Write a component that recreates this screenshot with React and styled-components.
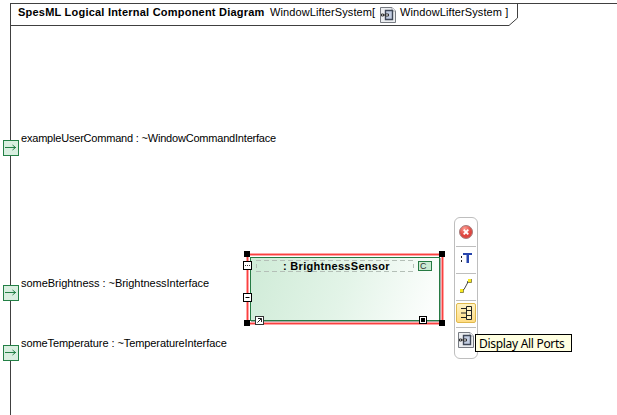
import React from "react";
import styled, { createGlobalStyle } from "styled-components";

const Global = createGlobalStyle`
  * { box-sizing: border-box; }
  body { margin: 0; background: #fff; overflow: hidden; }
`;

const Canvas = styled.main`
  position: relative;
  width: 617px;
  height: 415px;
  padding: 3px 0 0 10px;
  overflow: hidden;
  background: #fff;
  color: #000;
  font: 11px/14px "Liberation Sans", Arial, sans-serif;
`;

const Frame = styled.section`
  height: 412px;
  border: solid #404040;
  border-width: 1px 0 0 1px;
`;

const FrameTab = styled.header`
  position: relative;
  display: flex;
  align-items: flex-start;
  width: 507px;
  height: 22px;
  padding: 1px 0 0 7px;
  white-space: pre;
`;

const TabEdge = styled.svg`
  position: absolute;
  left: 0;
  top: 0;
`;

const Label = styled.span`
  display: block;
  white-space: pre;
  width: ${(p) => p.$w}px;
  flex: none;
  font-weight: ${(p) => (p.$bold ? 700 : 400)};
  letter-spacing: ${(p) => p.$track || 0}px;
`;

const TabIcon = styled.span`
  display: block;
  width: 20px;
  flex: none;
  height: 18px;
  padding-top: 2px;
`;

const Port = styled.div`
  position: absolute;
  left: 3px;
  top: ${(p) => p.$y}px;
  display: flex;
  gap: 2px;
`;

const PortBox = styled.span`
  display: block;
  width: 16px;
  height: 16px;
  border: 1px solid #238046;
  background: #d9efe0;
`;

const PortLabel = styled(Label)`
  margin-top: -9px;
`;

const Part = styled.article`
  position: absolute;
  left: 246px;
  top: 253px;
  width: 198px;
  height: 72px;
  border: 1px solid #ffa5a5;
  padding: 3px 2px 2px 3px;
  background: #fff;
  box-shadow: inset 0 0 0 1px #fa4040, inset 0 0 0 2px #ffa5a5;
`;

const PartBody = styled.div`
  display: flex;
  align-items: flex-start;
  width: 190px;
  height: 64px;
  padding: 2px 0 0 5px;
  border: 1px solid #267a43;
  background: linear-gradient(110deg, #cfebd7 0%, #e3f4e8 50%, #fff 100%);
  box-shadow: 1px 1px 0 #a5aaa7;
`;

const dash = "repeating-linear-gradient(90deg, #b4bfb7 0 5px, transparent 5px 8px)";

const PartName = styled.h1`
  width: 158px;
  height: 12px;
  margin: 0;
  padding: 1px 0 0 27px;
  background:
    ${dash} 0 0 / 100% 1px no-repeat,
    ${dash} 0 100% / 100% 1px no-repeat,
    linear-gradient(#b4bfb7, #b4bfb7) 0 4px / 1px 4px no-repeat,
    linear-gradient(#b4bfb7, #b4bfb7) 100% 4px / 1px 4px no-repeat;
  font-size: 11px;
  line-height: 10px;
`;

const TypeTag = styled.span`
  width: 14px;
  height: 10px;
  margin: 1px 0 0 4px;
  padding-left: 1px;
  border: 1px solid #267a43;
  background: #caead3;
  color: #333;
  font-size: 9px;
  line-height: 8px;
`;

const Handle = styled.i`
  position: absolute;
  left: ${(p) => p.$x}px;
  top: ${(p) => p.$y}px;
  width: 6px;
  height: 6px;
  background: #000;
`;

const Badge = styled.i`
  position: absolute;
  left: ${(p) => p.$x}px;
  top: ${(p) => p.$y}px;
  display: flex;
  width: ${(p) => p.$size || 9}px;
  height: ${(p) => p.$size || 9}px;
  border: 1px solid ${(p) => p.$line || "#000"};
  background: #fff;
`;

const Toolbar = styled.nav`
  position: absolute;
  left: 454px;
  top: 217px;
  display: flex;
  flex-direction: column;
  align-items: center;
  width: 24px;
  height: 142px;
  padding-top: 2px;
  border: 1px solid #bebebe;
  border-radius: 6px;
  background: #fff;
`;

const Tool = styled.button`
  display: flex;
  justify-content: center;
  align-items: center;
  flex: none;
  width: 20px;
  height: 20px;
  margin: 2px 0 4px;
  padding: 0;
  border: 1px solid ${(p) => (p.$active ? "#e0b94c" : "transparent")};
  border-radius: 2px;
  background: ${(p) => (p.$active ? "linear-gradient(#fff3c4, #ffdc84)" : "none")};
`;

const Divider = styled.hr`
  width: 20px;
  height: 1px;
  flex: none;
  margin: 0;
  border: 0;
  background: #bebebe;
`;

const Tooltip = styled.div`
  position: absolute;
  left: 475px;
  top: 334px;
  width: 97px;
  height: 18px;
  padding-left: 3px;
  border: 1px solid #000;
  background: #ffffe1;
  white-space: nowrap;
  font: 12px/17px "Noto Sans", "Open Sans", sans-serif;
  letter-spacing: -0.3px;
`;

const Svg = styled.svg`
  display: block;
  flex: none;
`;

function DiagramIcon() {
  return (
    <Svg width="16" height="16" viewBox="0 0 16 16" fill="none">
      <path d="M.5 .5H12L15.500 4v11.500H.5Z" fill="#eceef1" stroke="#777b82" />
      <path d="M12 .5v3.500h3.500" fill="#fff" stroke="#a5a8ad" />
      <path d="M5.500 3.500h7v9h-7z" fill="#c3cee3" stroke="#3f4858" strokeWidth="1.400" />
      <path d="M3 8h3" stroke="#222" />
      <path d="M5.500 7h3v2h-3zM1.500 7h2v2h-2z" fill="#fff" stroke="#333" />
    </Svg>
  );
}

function PortArrow() {
  return (
    <Svg width="14" height="14" viewBox="0 0 14 14" fill="none" stroke="#238046">
      <path d="M1 6.500h11" />
      <path d="M8.500 4l3 2.500-3 2.500" />
    </Svg>
  );
}

const ports = [
  { y: 140, text: "exampleUserCommand : ~WindowCommandInterface", w: 256, track: -0.2 },
  { y: 285, text: "someBrightness : ~BrightnessInterface", w: 190, track: -0.03 },
  { y: 345, text: "someTemperature : ~TemperatureInterface", w: 208, track: -0.08 },
];

const handles = [[-3, -3], [192, -3], [-3, 66], [192, 66]];

export default function App() {
  return (
    <Canvas>
      <Global />
      <Frame>
        <FrameTab>
          <TabEdge width="507" height="22" fill="none" stroke="#404040">
            <path d="M0 21.5H498L506.5 14V0" />
          </TabEdge>
          <Label $w={252} $bold $track={0.22}>SpesML Logical Internal Component Diagram</Label>
          <Label $w={110} $track={0.1}>WindowLifterSystem[</Label>
          <TabIcon><DiagramIcon /></TabIcon>
          <Label $w={110} $track={0.1}>WindowLifterSystem ]</Label>
        </FrameTab>
      </Frame>

      {ports.map((p) => (
        <Port key={p.y} $y={p.y}>
          <PortBox><PortArrow /></PortBox>
          <PortLabel $w={p.w} $track={p.track}>{p.text}</PortLabel>
        </Port>
      ))}

      <Part>
        <PartBody>
          <PartName><Label $w={125} $bold $track={0.3}>: BrightnessSensor</Label></PartName>
          <TypeTag>C</TypeTag>
        </PartBody>
        {handles.map(([x, y]) => <Handle key={`${x},${y}`} $x={x} $y={y} />)}
        <Badge $x={-4} $y={7}>
          <Svg width="7" height="7"><path d="M1 3.5h1m1 0h1m1 0h1" stroke="#333" /></Svg>
        </Badge>
        <Badge $x={-4} $y={39}>
          <Svg width="7" height="7"><path d="M1.5 3.5h4" stroke="#000" /></Svg>
        </Badge>
        <Badge $x={8} $y={62} $line="#333">
          <Svg width="7" height="7" fill="none" stroke="#222"><path d="M2 1.5h3.5V5M1.5 5.5l4-4" /></Svg>
        </Badge>
        <Badge $x={172} $y={62} $size={8}>
          <Svg width="6" height="6"><path d="M1 1h4v4H1z" /></Svg>
        </Badge>
      </Part>

      <Toolbar>
        <Tool aria-label="Remove">
          <Svg width="16" height="16" viewBox="0 0 16 16">
            <defs>
              <radialGradient id="remove" cx=".4" cy=".25">
                <stop stopColor="#ff9c91" /><stop offset="1" stopColor="#de4640" />
              </radialGradient>
            </defs>
            <circle cx="8" cy="8" r="6.5" fill="url(#remove)" stroke="#a58080" />
            <path d="M5.7 5.7l4.600 4.600m0-4.600l-4.600 4.600" stroke="#fff" strokeWidth="1.800" />
          </Svg>
        </Tool>
        <Divider />
        <Tool aria-label="Type">
          <Svg width="16" height="16" viewBox="0 0 16 16">
            <path d="M3 5h1v2H3zM3 9h1v2H3z" fill="#222" />
            <path d="M5 2h9v2h-3v8H8.500V4H5z" fill="#2745ad" />
          </Svg>
        </Tool>
        <Divider />
        <Tool aria-label="Connector">
          <Svg width="16" height="16" viewBox="0 0 16 16" fill="none">
            <path d="M4 11.500h2L9.500 5v-1.500h1.500" stroke="#333" strokeWidth=".9" />
            <path d="M10 1h3v3h-3zM2 11h3v3H2z" fill="#f7e820" />
            <path d="M13.500 1v3.500H10M5.500 11v3.500H2" stroke="#77711c" strokeWidth=".8" />
          </Svg>
        </Tool>
        <Divider />
        <Tool $active aria-label="Display All Ports">
          <Svg width="16" height="16" viewBox="0 0 16 16" fill="none" stroke="#222">
            <path d="M8.500 1.500h5v13h-5z" fill="#fff0c0" />
            <path d="M3 3.500h5M3 8h5M3 12.500h5" />
            <path d="M8.500 5.500h5M8.500 10.500h5" />
          </Svg>
        </Tool>
        <Divider />
        <Tool aria-label="Internal diagram"><DiagramIcon /></Tool>
      </Toolbar>

      <Tooltip>Display All Ports</Tooltip>
    </Canvas>
  );
}
